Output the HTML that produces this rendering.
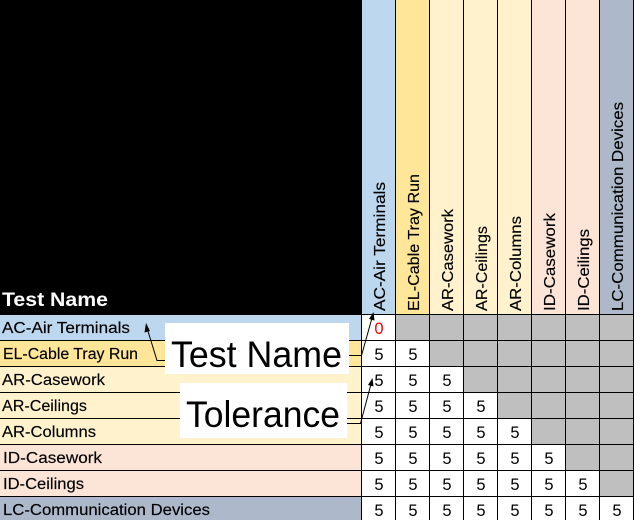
<!DOCTYPE html>
<html>
<head>
<meta charset="utf-8">
<style>
html,body{margin:0;padding:0;background:#fff;width:634px;height:520px;overflow:hidden}
svg{display:block}
text{font-family:"Liberation Sans",sans-serif}
.r{font-size:15.5px;fill:#000;stroke:#000;stroke-width:.15}
.h{font-size:15.5px;fill:#000;stroke:#000;stroke-width:.15}
.d{font-size:16.5px;fill:#000;text-anchor:middle}
.b{font-size:37px;fill:#000}
</style>
</head>
<body>
<svg width="634" height="520" viewBox="0 0 634 520" xmlns="http://www.w3.org/2000/svg">
<!-- header background -->
<rect x="0" y="0" width="362" height="315" fill="#000"/>
<rect x="362" y="0" width="33" height="314" fill="#BDD7EE"/>
<rect x="396" y="0" width="33" height="314" fill="#FFE699"/>
<rect x="430" y="0" width="33" height="314" fill="#FFF2CC"/>
<rect x="464" y="0" width="33" height="314" fill="#FFF2CC"/>
<rect x="498" y="0" width="33" height="314" fill="#FFF2CC"/>
<rect x="532" y="0" width="33" height="314" fill="#FCE4D6"/>
<rect x="566" y="0" width="33" height="314" fill="#FCE4D6"/>
<rect x="600" y="0" width="33" height="314" fill="#ADB9CA"/>
<!-- row backgrounds -->
<rect x="0" y="315" width="361" height="25" fill="#BDD7EE"/>
<rect x="0" y="341" width="361" height="25" fill="#FFE699"/>
<rect x="0" y="367" width="361" height="25" fill="#FFF2CC"/>
<rect x="0" y="393" width="361" height="25" fill="#FFF2CC"/>
<rect x="0" y="419" width="361" height="25" fill="#FFF2CC"/>
<rect x="0" y="445" width="361" height="25" fill="#FCE4D6"/>
<rect x="0" y="471" width="361" height="25" fill="#FCE4D6"/>
<rect x="0" y="497" width="361" height="23" fill="#ADB9CA"/>
<!-- gray cells -->
<g fill="#BFBFBF">
<rect x="396" y="315" width="238" height="25"/>
<rect x="430" y="341" width="204" height="25"/>
<rect x="464" y="367" width="170" height="25"/>
<rect x="498" y="393" width="136" height="25"/>
<rect x="532" y="419" width="102" height="25"/>
<rect x="566" y="445" width="68" height="25"/>
<rect x="600" y="471" width="34" height="25"/>
</g>
<!-- grid -->
<g fill="#000">
<rect x="0" y="314" width="634" height="1"/>
<rect x="0" y="340" width="634" height="1"/>
<rect x="0" y="366" width="634" height="1"/>
<rect x="0" y="392" width="634" height="1"/>
<rect x="0" y="418" width="634" height="1"/>
<rect x="0" y="444" width="634" height="1"/>
<rect x="0" y="470" width="634" height="1"/>
<rect x="0" y="496" width="634" height="1"/>
<rect x="361" y="0" width="1" height="520"/>
<rect x="395" y="0" width="1" height="520"/>
<rect x="429" y="0" width="1" height="520"/>
<rect x="463" y="0" width="1" height="520"/>
<rect x="497" y="0" width="1" height="520"/>
<rect x="531" y="0" width="1" height="520"/>
<rect x="565" y="0" width="1" height="520"/>
<rect x="599" y="0" width="1" height="520"/>
<rect x="633" y="0" width="1" height="520"/>
</g>
<!-- header title -->
<text x="2" y="306" font-size="19.5" font-weight="700" fill="#fff" textLength="106" lengthAdjust="spacingAndGlyphs">Test Name</text>
<!-- row labels -->
<text class="r" x="2" y="333" textLength="128" lengthAdjust="spacingAndGlyphs">AC-Air Terminals</text>
<text class="r" x="3" y="359" textLength="135" lengthAdjust="spacingAndGlyphs">EL-Cable Tray Run</text>
<text class="r" x="2" y="385" textLength="103" lengthAdjust="spacingAndGlyphs">AR-Casework</text>
<text class="r" x="2" y="411" textLength="85" lengthAdjust="spacingAndGlyphs">AR-Ceilings</text>
<text class="r" x="2" y="437" textLength="94" lengthAdjust="spacingAndGlyphs">AR-Columns</text>
<text class="r" x="3" y="463" textLength="99" lengthAdjust="spacingAndGlyphs">ID-Casework</text>
<text class="r" x="3" y="489" textLength="81" lengthAdjust="spacingAndGlyphs">ID-Ceilings</text>
<text class="r" x="3" y="515" textLength="207" lengthAdjust="spacingAndGlyphs">LC-Communication Devices</text>
<!-- rotated headers -->
<text class="h" transform="translate(385,311) rotate(-90)" textLength="129" lengthAdjust="spacingAndGlyphs">AC-Air Terminals</text>
<text class="h" transform="translate(419,311) rotate(-90)" textLength="137" lengthAdjust="spacingAndGlyphs">EL-Cable Tray Run</text>
<text class="h" transform="translate(453,311) rotate(-90)" textLength="102" lengthAdjust="spacingAndGlyphs">AR-Casework</text>
<text class="h" transform="translate(487,311) rotate(-90)" textLength="85" lengthAdjust="spacingAndGlyphs">AR-Ceilings</text>
<text class="h" transform="translate(521,311) rotate(-90)" textLength="95" lengthAdjust="spacingAndGlyphs">AR-Columns</text>
<text class="h" transform="translate(555,311) rotate(-90)" textLength="98" lengthAdjust="spacingAndGlyphs">ID-Casework</text>
<text class="h" transform="translate(589,311) rotate(-90)" textLength="82" lengthAdjust="spacingAndGlyphs">ID-Ceilings</text>
<text class="h" transform="translate(623,311) rotate(-90)" textLength="209" lengthAdjust="spacingAndGlyphs">LC-Communication Devices</text>
<!-- values -->
<text class="d" x="379" y="334" style="fill:#f00">0</text>
<text class="d" x="379" y="360">5</text><text class="d" x="413" y="360">5</text>
<text class="d" x="379" y="386">5</text><text class="d" x="413" y="386">5</text><text class="d" x="447" y="386">5</text>
<text class="d" x="379" y="412">5</text><text class="d" x="413" y="412">5</text><text class="d" x="447" y="412">5</text><text class="d" x="481" y="412">5</text>
<text class="d" x="379" y="438">5</text><text class="d" x="413" y="438">5</text><text class="d" x="447" y="438">5</text><text class="d" x="481" y="438">5</text><text class="d" x="515" y="438">5</text>
<text class="d" x="379" y="464">5</text><text class="d" x="413" y="464">5</text><text class="d" x="447" y="464">5</text><text class="d" x="481" y="464">5</text><text class="d" x="515" y="464">5</text><text class="d" x="549" y="464">5</text>
<text class="d" x="379" y="490">5</text><text class="d" x="413" y="490">5</text><text class="d" x="447" y="490">5</text><text class="d" x="481" y="490">5</text><text class="d" x="515" y="490">5</text><text class="d" x="549" y="490">5</text><text class="d" x="583" y="490">5</text>
<text class="d" x="379" y="516">5</text><text class="d" x="413" y="516">5</text><text class="d" x="447" y="516">5</text><text class="d" x="481" y="516">5</text><text class="d" x="515" y="516">5</text><text class="d" x="549" y="516">5</text><text class="d" x="583" y="516">5</text><text class="d" x="617" y="516">5</text>
<!-- annotation boxes -->
<rect x="165" y="323" width="184" height="51" fill="#fff"/>
<text class="b" x="171" y="367" textLength="171" lengthAdjust="spacingAndGlyphs">Test Name</text>
<rect x="180" y="383" width="167" height="55" fill="#fff"/>
<text class="b" x="186" y="427" textLength="154" lengthAdjust="spacingAndGlyphs">Tolerance</text>
<!-- arrows -->
<g fill="none" stroke="#000" stroke-width="1">
<path d="M165 360.5H157L147 328"/>
<path d="M349 355.5H361.5L372 318"/>
<path d="M347 423.5H360.5L371 384"/>
</g>
<g fill="#000">
<path d="M146 323L150 331L144.5 332.5Z"/>
<path d="M373.5 312L374.5 320.5L369 319Z"/>
<path d="M372.5 378L373.5 386.5L368 385Z"/>
</g>
</svg>
</body>
</html>
